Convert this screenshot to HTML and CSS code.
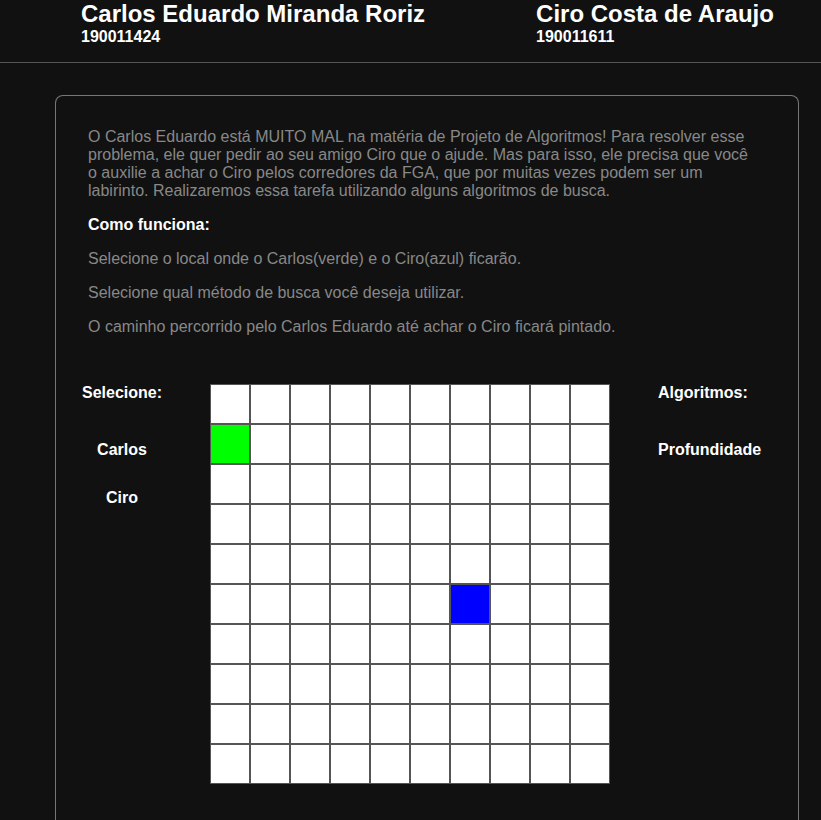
FILE: index.html
```html
<!DOCTYPE html>
<html lang="pt-BR">
<head>
<meta charset="utf-8">
<title>Labirinto</title>
<link rel="stylesheet" href="styles.css">
</head>
<body>
<header class="header">
  <div class="author">
    <h2 class="author-name">Carlos Eduardo Miranda Roriz</h2>
    <div class="author-id">190011424</div>
  </div>
  <div class="author author-2">
    <h2 class="author-name">Ciro Costa de Araujo</h2>
    <div class="author-id">190011611</div>
  </div>
</header>
<main class="card">
  <div class="intro">
    <p class="text">O Carlos Eduardo está MUITO MAL na matéria de Projeto de Algoritmos! Para resolver esse problema, ele quer pedir ao seu amigo Ciro que o ajude. Mas para isso, ele precisa que você o auxilie a achar o Ciro pelos corredores da FGA, que por muitas vezes podem ser um labirinto. Realizaremos essa tarefa utilizando alguns algoritmos de busca.</p>
    <p class="subtitle">Como funciona:</p>
    <p class="text">Selecione o local onde o Carlos(verde) e o Ciro(azul) ficarão.</p>
    <p class="text">Selecione qual método de busca você deseja utilizar.</p>
    <p class="text">O caminho percorrido pelo Carlos Eduardo até achar o Ciro ficará pintado.</p>
  </div>
  <div class="board">
    <div class="side side-left">
      <div class="side-title">Selecione:</div>
      <div class="side-item">Carlos</div>
      <div class="side-item">Ciro</div>
    </div>
    <div class="grid" id="grid"></div>
    <div class="side side-right">
      <div class="side-title">Algoritmos:</div>
      <div class="side-item">Profundidade</div>
    </div>
  </div>
</main>
<script>
  var g = document.getElementById('grid');
  for (var r = 0; r < 10; r++) {
    for (var c = 0; c < 10; c++) {
      var d = document.createElement('div');
      d.className = 'cell';
      if (r === 1 && c === 0) d.className += ' cell-start';
      if (r === 5 && c === 6) d.className += ' cell-end';
      g.appendChild(d);
    }
  }
</script>
</body>
</html>
```

FILE: styles.css
```css
* { box-sizing: border-box; }
html, body { margin: 0; padding: 0; }
body {
  background: #111111;
  color: #ffffff;
  font-family: "Liberation Sans", Arial, sans-serif;
  font-size: 16px;
  min-height: 820px;
}
.header {
  display: flex;
  padding: 0 0 16px 81px;
  border-bottom: 1px solid #555555;
}
.author-2 { margin-left: 111px; }
.author-name {
  margin: 0;
  font-size: 24px;
  font-weight: bold;
  line-height: normal;
}
.author-id {
  font-size: 16px;
  font-weight: bold;
  line-height: normal;
}
.card {
  margin: 32px 22px 0 55px;
  border: 1px solid #777777;
  border-bottom: none;
  border-radius: 8px 8px 0 0;
  padding: 32px 32px 40px 32px;
  min-height: 740px;
}
.intro { padding-right: 12px; }
.text {
  margin: 0 0 16px 0;
  color: #888888;
  line-height: normal;
}
.subtitle {
  margin: 0 0 16px 0;
  font-weight: bold;
  color: #ffffff;
}
.board {
  display: flex;
  align-items: flex-start;
  gap: 48px;
  margin: 48px 0 0 -6px;
}
.side {
  display: flex;
  flex-direction: column;
  font-weight: bold;
}
.side-left { width: 80px; align-items: center; }
.side-right { align-items: flex-start; }
.side-item { margin-top: 39px; }
.side-item + .side-item { margin-top: 30px; }
.grid {
  display: grid;
  grid-template-columns: repeat(10, 40px);
  grid-template-rows: repeat(10, 40px);
  width: 400px;
}
.cell {
  background: #ffffff;
  border: 1px solid #555555;
}
.cell-start { background: #00ff00; }
.cell-end { background: #0000ff; }
```
